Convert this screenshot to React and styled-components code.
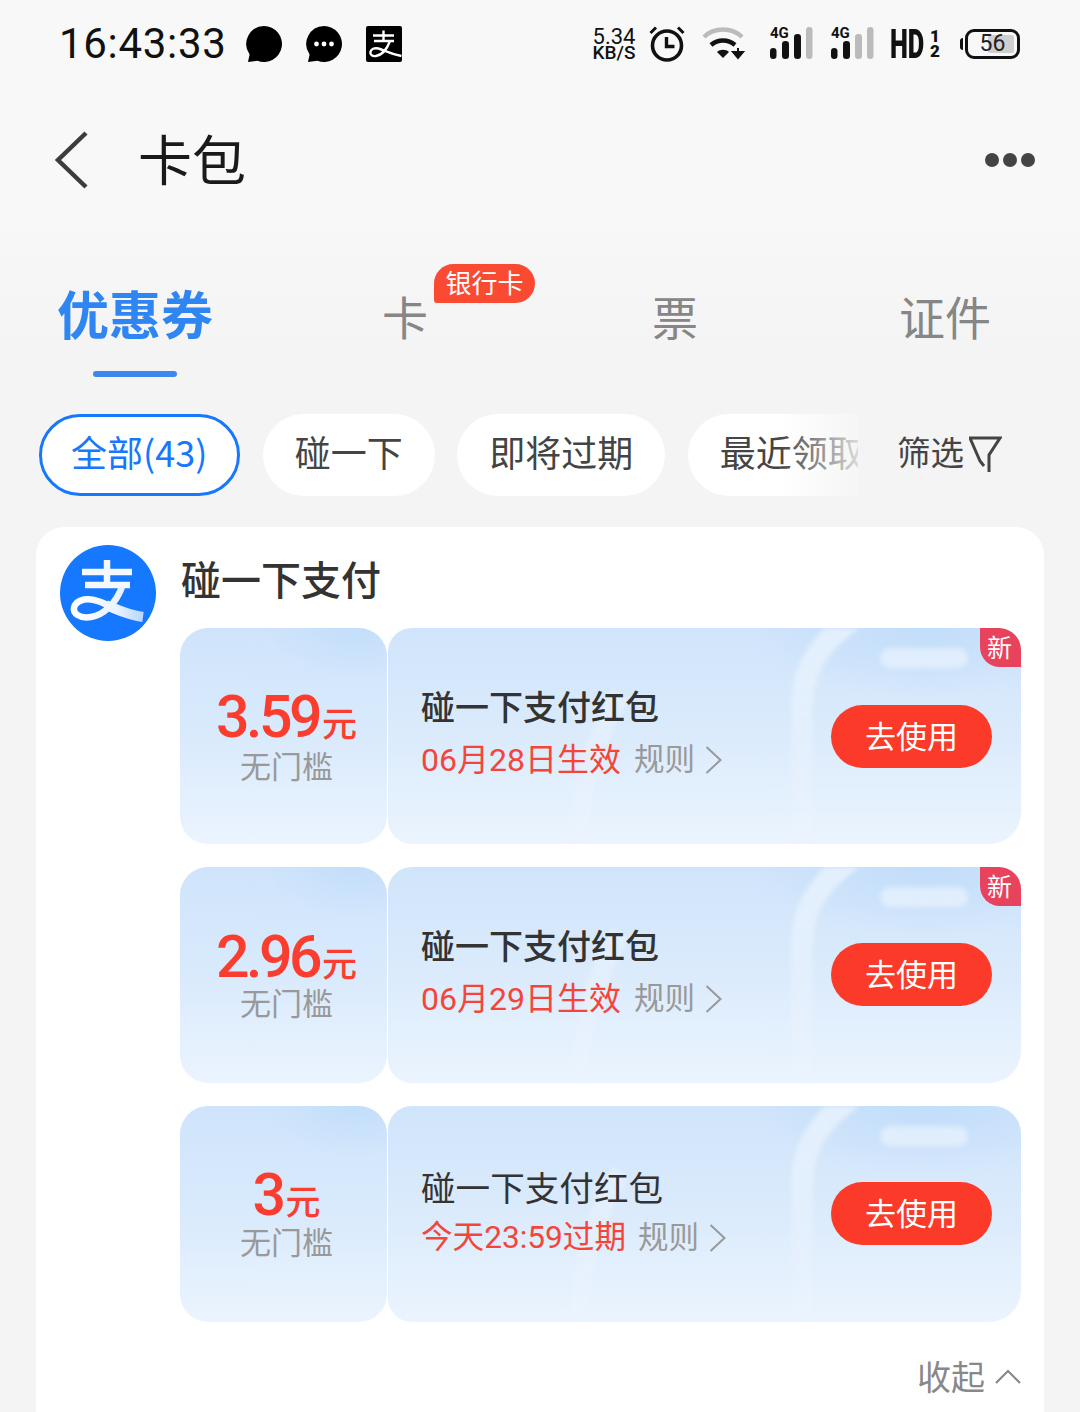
import React from 'react';
import styled, { createGlobalStyle } from 'styled-components';

const CJK = '"Noto Sans CJK SC", "Noto Sans", sans-serif';

const Global = createGlobalStyle`
  html, body { margin: 0; padding: 0; background: #f4f4f4; }
  * { box-sizing: border-box; }
`;

const Page = styled.div`
  width: 1080px; height: 1412px; overflow: hidden;
  font-family: Roboto, ${CJK};
  background: #f4f4f4;
`;
const TopArea = styled.div`background: #f8f8f8; height: 232px;`;
const StatusBar = styled.div`
  height: 90px; padding: 0 60px; display: flex; align-items: center; justify-content: space-between;
`;
const StatusLeft = styled.div`display: flex; align-items: center; margin-top: -2px;`;
const Clock = styled.span`font: 400 42px/48px Roboto, sans-serif; color: #111; letter-spacing: 0.7px; margin: 0 18px 0 -1px;`;
const NotifIcon = styled.svg`width: 38px; height: 38px; margin-right: 22px; display: block;`;
const StatusRight = styled.div`display: flex; align-items: center; margin-top: -2px;`;
const Speed = styled.div`
  font: 500 19px/16px Roboto, sans-serif; color: #111; text-align: center; width: 44px; margin-right: 13px;
  & > span { display: block; }
  & > span:first-child { font-size: 22px; font-weight: 400; line-height: 17px; }
`;
const AlarmIcon = styled.svg`display: block; margin-right: 17px;`;
const WifiIcon = styled.svg`display: block; margin-right: 24px;`;
const BarsIcon = styled.svg`display: block;`;
const Sig = styled.div`position: relative; width: 44px; height: 36px; margin-right: ${p => p.$gap}px;`;
const SigLabel = styled.span`position: absolute; left: 0; top: -1px; font: 700 15px/16px Roboto, sans-serif; color: #111;`;
const HD = styled.span`
  flex: none; width: 40px; font: 900 41px/38px Roboto, sans-serif; color: #111; white-space: nowrap;
  display: block; transform: scaleX(.62); transform-origin: left;
`;
const Frac = styled.div`
  display: flex; flex-direction: column; align-items: center; width: 10px; font: 900 17px/15px Roboto, sans-serif; color: #111; margin-right: 20px;
  & > span { display: block; }
`;
const Battery = styled.div`
  position: relative; width: 55px; height: 30px; border: 3px solid #111; border-radius: 9px; overflow: hidden;
  display: flex; align-items: center; justify-content: center; font: 400 23px/24px Roboto, sans-serif; color: #222; background: #f8f8f8;
  & > i { position: absolute; right: 3px; top: 3px; bottom: 3px; width: 26px; background: #cfcfcf; border-radius: 2px; }
  & > span { position: relative; }
`;
const BatteryWrap = styled.div`display: flex; align-items: center; gap: 2px;`;
const BatteryNub = styled.div`width: 3px; height: 12px; background: #111; border-radius: 3px 0 0 3px;`;

const NavBar = styled.div`height: 142px; display: flex; align-items: center; padding: 0 44px 0 54px; margin-top: -1px;`;
const BackIcon = styled.svg`width: 36px; height: 58px; display: block;`;
const NavTitle = styled.h1`flex: 1; margin: -4px 0 0 48px; font: 400 54px/60px ${CJK}; color: #1a1a1a;`;
const Dots = styled.svg`width: 52px; height: 16px; display: block;`;

const Tabs = styled.div`
  display: grid; grid-template-columns: repeat(4, 270px); height: 182px;
  background: linear-gradient(180deg, #f7f7f7 0, #f4f4f4 120px);
`;
const Tab = styled.div`
  position: relative; display: flex; justify-content: center; padding-top: ${p => p.$active ? '47px' : '50px'};
  font: ${p => p.$active ? '700 52px/68px' : '400 46px/66px'} ${CJK};
  color: ${p => p.$active ? '#2f86f2' : '#868686'};
`;
const TabLine = styled.i`position: absolute; left: 93px; top: 139px; width: 84px; height: 6px; border-radius: 3px; background: #3b87ee;`;
const TabBadge = styled.span`
  position: absolute; left: 164px; top: 32px; height: 39px; width: 101px; border-radius: 20px 20px 20px 3px; background: #fb4a32;
  display: flex; align-items: center; justify-content: center; padding-bottom: 3px; font: 400 26px/30px ${CJK}; color: #fff;
`;

const ChipRow = styled.div`display: flex; align-items: center; height: 82px; padding-left: 39px;`;
const ChipScroll = styled.div`position: relative; display: flex; gap: 22.5px; width: 819px; overflow: hidden; flex: none;`;
const Chip = styled.div`
  flex: none; height: 82px; border-radius: 41px; padding: 0 ${p => p.$active ? '30px' : '32px'} 8px ${p => p.$active ? '29px' : '32px'};
  display: flex; align-items: center; font: 400 36px/44px ${CJK};
  background: #fff; color: ${p => p.$active ? '#1677ff' : '#444'};
  border: ${p => p.$active ? '3px solid #1677ff' : 'none'};
`;
const Fade = styled.i`position: absolute; right: 0; top: 0; bottom: 0; width: 78px; background: linear-gradient(90deg, rgba(244,244,244,0), rgba(244,244,244,.85));`;
const FilterBtn = styled.div`display: flex; align-items: center; margin-left: 39px; font: 400 33.5px/44px ${CJK}; color: #444; gap: 5px;`;
const FilterLabel = styled.span`margin-top: -8px;`;
const FilterIcon = styled.svg`width: 33px; height: 38px; display: block; margin-top: -3px;`;

const Card = styled.div`
  margin: 31px 36px 0; height: 900px; background: #fff; border-radius: 28px 28px 0 0; padding: 18px 23px 0 24px;
`;
const CardHead = styled.div`display: flex; gap: 25px; height: 83px;`;
const Logo = styled.svg`width: 96px; height: 96px; display: block; flex: none;`;
const CardTitle = styled.h2`margin: 6px 0 0; font: 500 40px/54px ${CJK}; color: #333;`;
const List = styled.div`margin-left: 120px; display: flex; flex-direction: column; gap: 23px;`;
const Ticket = styled.div`display: flex; height: 216px; width: 841px; gap: 1px; position: relative;`;
const Stub = styled.div`
  width: 207px; flex: none; border-radius: 28px; overflow: hidden;
  background:
    radial-gradient(90px 50px at 85% 0%, rgba(190,220,250,.7), rgba(190,220,250,0)),
    linear-gradient(180deg, #cfe4fb 0%, #d9eafc 50%, #ebf4fe 100%);
  display: flex; flex-direction: column; align-items: center; padding: ${p => p.$top}px 0 0 6px;
`;
const Amount = styled.div`display: flex; align-items: baseline; font: 500 59px/66px Roboto, ${CJK}; letter-spacing: -3.5px; color: #fa3d2f;`;
const Unit = styled.span`font: 500 35px/40px ${CJK}; margin-left: 3px; letter-spacing: 0;`;
const Threshold = styled.div`font: 400 31px/42px ${CJK}; color: #999; margin-top: ${p => p.$mt}px;`;
const Body = styled.div`
  position: relative; flex: 1; border-radius: 24px 28px 32px 24px; overflow: hidden;
  background:
    radial-gradient(170px 70px at 85% 0%, rgba(190,220,250,.8), rgba(190,220,250,0)),
    linear-gradient(180deg, #d0e4fb 0%, #dbebfc 50%, #ebf4fe 100%);
  display: flex; align-items: flex-start; justify-content: space-between; padding: 0 29px 0 33px;
`;
const Deco = styled.svg`position: absolute; inset: 0; width: 633px; height: 216px; filter: blur(2.5px);`;
const Info = styled.div`position: relative; padding-top: ${p => p.$top}px;`;
const InfoTitle = styled.div`font: ${p => p.$bold ? '500 34px' : '400 34.6px'}/46px ${CJK}; color: #333; margin-bottom: ${p => p.$gap}px;`;
const InfoLine = styled.div`display: flex; align-items: center; font: 400 ${p => p.$size}px/42px Roboto, ${CJK}; color: #f5453a;`;
const Rule = styled.span`color: #999; font-size: 30.5px; margin-left: ${p => p.$ml}px;`;
const Chev = styled.svg`width: 17px; height: 30px; margin-left: 10px; display: block;`;
const UseBtn = styled.div`
  position: relative; margin-top: ${p => p.$top}px; width: 161px; height: 63px; border-radius: 32px; background: #fb3a2a; color: #fff;
  display: flex; align-items: center; justify-content: center; padding-bottom: 4px; font: 400 31px/40px ${CJK};
`;
const NewTag = styled.span`
  position: absolute; right: 0; top: 0; width: 41px; height: 39px; background: #e8435c; color: #fff;
  border-radius: 0 22px 0 20px; display: flex; align-items: center; justify-content: center; padding: 0 2px 4px 0; font: 400 25px/30px ${CJK};
`;
const Collapse = styled.div`
  display: flex; align-items: center; justify-content: flex-end; gap: 9px; margin-top: 30px; margin-right: -1px; font: 400 34px/48px ${CJK}; color: #888;
`;
const UpIcon = styled.svg`width: 28px; height: 16px; display: block;`;

const Bubble = ({ dots }) => (
  <NotifIcon viewBox="0 0 38 38">
    <path d="M19 1a18 18 0 1 1-6.500 34.800L3 37l1.600-7.600A18 18 0 0 1 19 1z" fill="#000" />
    {dots && <g fill="#fff"><circle cx="11.500" cy="19" r="2.400" /><circle cx="19" cy="19" r="2.400" /><circle cx="26.500" cy="19" r="2.400" /></g>}
  </NotifIcon>
);

const AliSquare = () => (
  <NotifIcon viewBox="0 0 38 38">
    <rect x="1" y="1" width="36" height="36" rx="2" fill="#000" />
    <g fill="none" stroke="#fff" strokeWidth="2.400">
      <path d="M8 10.500h21M18.500 5.500v10M9 16h20" />
      <path d="M25 16c-3 8-8 14-14 15-4 .6-6-1.500-5.600-4 .5-3 4-4.500 8-3.500 6 1.500 12 5.500 23 7.500" />
    </g>
  </NotifIcon>
);

const Signal = ({ on, gap }) => (
  <Sig $gap={gap}>
    <BarsIcon width="44" height="36" viewBox="0 0 44 36">
      {[{ x: 0, w: 6.500, y: 22, h: 11 }, { x: 12, w: 7, y: 15, h: 18 }, { x: 24, w: 7, y: 8, h: 25 }, { x: 36, w: 6.500, y: 1, h: 32 }].map((b, i) => (
        <rect key={i} x={b.x} y={b.y} width={b.w} height={b.h} rx="3.300" fill={i < on ? '#111' : '#bbb'} />
      ))}
    </BarsIcon>
    <SigLabel>4G</SigLabel>
  </Sig>
);

const Coupon = ({ amount, thMt, titleBold, infoTop, gap, sub, subSize, ruleMl, btnTop, isNew, top, id }) => (
  <Ticket>
    <Stub $top={top}>
      <Amount>{amount}<Unit>元</Unit></Amount>
      <Threshold $mt={thMt}>无门槛</Threshold>
    </Stub>
    <Body>
      <Deco viewBox="0 0 633 216" fill="none">
        <defs>
          <linearGradient id={`fade${id}`} gradientUnits="userSpaceOnUse" x1="0" y1="0" x2="0" y2="216">
            <stop offset="0" stopColor="#fff" stopOpacity=".5" />
            <stop offset=".45" stopColor="#fff" stopOpacity=".25" />
            <stop offset="1" stopColor="#fff" stopOpacity=".05" />
          </linearGradient>
        </defs>
        <path d="M414 216V80c0-36 14-62 50-88" stroke={`url(#fade${id})`} strokeWidth="22" />
        <rect x="492" y="20" width="88" height="20" rx="10" fill="#fff" fillOpacity=".42" />
        <path d="M190 216c2-60 22-115 42-150" stroke={`url(#fade${id})`} strokeWidth="20" />
      </Deco>
      <Info $top={infoTop}>
        <InfoTitle $bold={titleBold} $gap={gap}>碰一下支付红包</InfoTitle>
        <InfoLine $size={subSize}>{sub}<Rule $ml={ruleMl}>规则</Rule>
          <Chev viewBox="0 0 17 30" fill="none"><path d="M1.500 2l14 13-14 13" stroke="#999" strokeWidth="2" /></Chev>
        </InfoLine>
      </Info>
      <UseBtn $top={btnTop}>去使用</UseBtn>
    </Body>
    {isNew && <NewTag>新</NewTag>}
  </Ticket>
);

export default function App() {
  return (
    <Page>
      <Global />
      <TopArea>
        <StatusBar>
          <StatusLeft>
            <Clock>16:43:33</Clock>
            <Bubble />
            <Bubble dots />
            <AliSquare />
          </StatusLeft>
          <StatusRight>
            <Speed><span>5.34</span><span>KB/S</span></Speed>
            <AlarmIcon width="36" height="36" viewBox="0 0 36 36" fill="none">
              <circle cx="18" cy="19.500" r="14.500" stroke="#111" strokeWidth="3.600" />
              <path d="M17.500 11v9.500h8" stroke="#111" strokeWidth="3.400" />
              <path d="M1.500 7L7 1.500M34.500 7L29 1.500" stroke="#111" strokeWidth="3" />
            </AlarmIcon>
            <WifiIcon width="44" height="36" viewBox="0 0 44 36" fill="none">
              <path d="M2 11C12 1 30 1 40 11" stroke="#bbb" strokeWidth="4.500" />
              <path d="M9 19c7-6 17-6 24 0" stroke="#111" strokeWidth="4.500" />
              <path d="M15 26l6 6 6-6c-3-3-9-3-12 0z" fill="#111" />
              <path d="M36 22v6M31 26h10l-5 6z" stroke="#111" strokeWidth="2" fill="#111" />
            </WifiIcon>
            <Signal on={3} gap={17} />
            <Signal on={2} gap={15} />
            <HD>HD</HD>
            <Frac><span>1</span><span>2</span></Frac>
            <BatteryWrap>
              <BatteryNub />
              <Battery><i /><span>56</span></Battery>
            </BatteryWrap>
          </StatusRight>
        </StatusBar>
        <NavBar>
          <BackIcon viewBox="0 0 36 58" fill="none"><path d="M32 2L4 29l28 27" stroke="#3d3d3d" strokeWidth="4.500" /></BackIcon>
          <NavTitle>卡包</NavTitle>
          <Dots viewBox="0 0 52 16" fill="#444"><circle cx="8" cy="8" r="7" /><circle cx="26" cy="8" r="7" /><circle cx="44" cy="8" r="7" /></Dots>
        </NavBar>
      </TopArea>
      <Tabs>
        <Tab $active>优惠券<TabLine /></Tab>
        <Tab>卡<TabBadge>银行卡</TabBadge></Tab>
        <Tab>票</Tab>
        <Tab>证件</Tab>
      </Tabs>
      <ChipRow>
        <ChipScroll>
          <Chip $active>全部(43)</Chip>
          <Chip>碰一下</Chip>
          <Chip>即将过期</Chip>
          <Chip>最近领取</Chip>
          <Fade />
        </ChipScroll>
        <FilterBtn>
          <FilterLabel>筛选</FilterLabel>
          <FilterIcon viewBox="0 0 33 38" fill="none"><path d="M15 31l-4-5L1 3h30L20 20v17" stroke="#444" strokeWidth="3" /></FilterIcon>
        </FilterBtn>
      </ChipRow>
      <Card>
        <CardHead>
          <Logo viewBox="0 0 96 96">
            <defs>
              <linearGradient id="ribbon" gradientUnits="userSpaceOnUse" x1="14" y1="60" x2="84" y2="72">
                <stop offset="0" stopColor="#fff" />
                <stop offset=".6" stopColor="#eaf3ff" />
                <stop offset="1" stopColor="#b6d5ff" />
              </linearGradient>
            </defs>
            <circle cx="48" cy="48" r="48" fill="#1677ff" />
            <path d="M22 27h50M47 15v25M25 40h45" fill="none" stroke="#f4f8ff" strokeWidth="6.500" />
            <path d="M62 42C56 58 44 70 31 72 19 74 13 68 14 63c1-7 10-10 20-8 14 3 24 13 48 17" fill="none" stroke="url(#ribbon)" strokeWidth="6.500" />
            <path d="M46 60c12 5 22 10 37 12" fill="none" stroke="url(#ribbon)" strokeWidth="10" />
          </Logo>
          <CardTitle>碰一下支付</CardTitle>
        </CardHead>
        <List>
          <Coupon id="a" amount="3.59" top={56} thMt={-6} infoTop={55} gap={10} titleBold sub="06月28日生效" subSize={32} ruleMl={13} btnTop={77} isNew />
          <Coupon id="b" amount="2.96" top={57} thMt={-9} infoTop={55} gap={10} titleBold sub="06月29日生效" subSize={32} ruleMl={13} btnTop={76} isNew />
          <Coupon id="c" amount="3" top={56} thMt={-8} infoTop={57} gap={8} sub="今天23:59过期" subSize={31.6} ruleMl={12} btnTop={76} />
        </List>
        <Collapse>收起
          <UpIcon viewBox="0 0 28 16" fill="none"><path d="M2 15L14 3l12 12" stroke="#888" strokeWidth="2.200" /></UpIcon>
        </Collapse>
      </Card>
    </Page>
  );
}
